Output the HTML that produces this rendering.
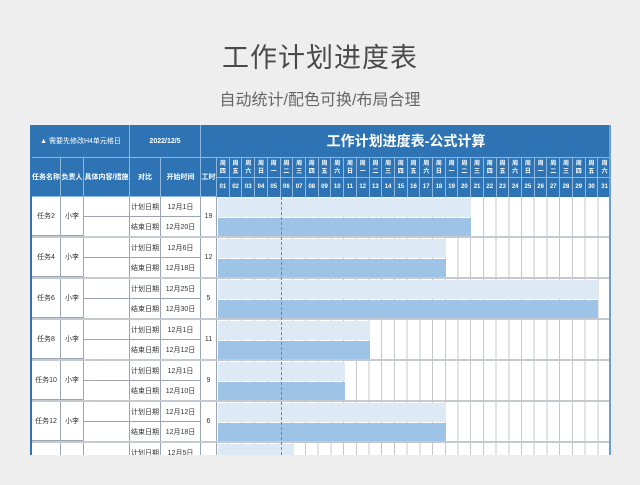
<!DOCTYPE html>
<html><head><meta charset="utf-8">
<style>
*{margin:0;padding:0;box-sizing:border-box}
body{width:640px;height:485px;background:#eeeeee;position:relative;overflow:hidden;font-family:"Liberation Sans","Noto Sans CJK SC",sans-serif}
.t{position:absolute;left:0;width:640px;text-align:center;color:#4a4a4a}
.wrap{position:absolute;left:30px;top:125px;width:581px;height:330px;overflow:hidden;background:#fff;border-left:2px solid #2e74b5;border-right:2px solid #6a9fd0}
.a{position:absolute;display:flex;align-items:center;justify-content:center;font-size:7px;color:#333;white-space:nowrap}
.h{background:#2e74b5;color:#fff;font-weight:bold;border-right:1px solid #8fb6dc;border-bottom:1px solid #8fb6dc}
.b{border-right:1px solid #9aa6b6;border-bottom:1px solid #9aa6b6}
</style></head><body>
<div class="t" style="top:36px;font-size:27px;letter-spacing:1px">工作计划进度表</div>
<div class="t" style="top:86px;font-size:16px;color:#666">自动统计/配色可换/布局合理</div>
<div class="wrap">
<div style="position:absolute;left:0;top:0;width:579px;height:72px;background:#2e74b5"></div>
<div class="a h" style="left:0;top:0;width:98px;height:33px;font-weight:normal">▲ 需要先修改H4单元格日</div>
<div class="a h" style="left:98px;top:0;width:71px;height:33px">2022/12/5</div>
<div class="a h" style="left:169px;top:0;width:410px;height:33px;font-size:14px;border-right:none">工作计划进度表-公式计算</div>
<div class="a h" style="left:0;top:33px;width:29px;height:39px">任务名称</div>
<div class="a h" style="left:29px;top:33px;width:23px;height:39px">负责人</div>
<div class="a h" style="left:52px;top:33px;width:46px;height:39px">具体内容/措施</div>
<div class="a h" style="left:98px;top:33px;width:31px;height:39px">对比</div>
<div class="a h" style="left:129px;top:33px;width:40px;height:39px">开始时间</div>
<div class="a h" style="left:169px;top:33px;width:16px;height:39px">工时</div>
<div style="position:absolute;left:185px;top:33px;width:394px;height:39px;display:grid;grid-template-columns:repeat(31,1fr);grid-template-rows:20px 19px;color:#fff;font-size:6px;font-weight:bold;text-align:center;line-height:8px">
<div style="border-right:1px solid #8fb6dc;border-bottom:1px solid #8fb6dc;padding-top:2px">周<br>四</div><div style="border-right:1px solid #8fb6dc;border-bottom:1px solid #8fb6dc;padding-top:2px">周<br>五</div><div style="border-right:1px solid #8fb6dc;border-bottom:1px solid #8fb6dc;padding-top:2px">周<br>六</div><div style="border-right:1px solid #8fb6dc;border-bottom:1px solid #8fb6dc;padding-top:2px">周<br>日</div><div style="border-right:1px solid #8fb6dc;border-bottom:1px solid #8fb6dc;padding-top:2px">周<br>一</div><div style="border-right:1px solid #8fb6dc;border-bottom:1px solid #8fb6dc;padding-top:2px">周<br>二</div><div style="border-right:1px solid #8fb6dc;border-bottom:1px solid #8fb6dc;padding-top:2px">周<br>三</div><div style="border-right:1px solid #8fb6dc;border-bottom:1px solid #8fb6dc;padding-top:2px">周<br>四</div><div style="border-right:1px solid #8fb6dc;border-bottom:1px solid #8fb6dc;padding-top:2px">周<br>五</div><div style="border-right:1px solid #8fb6dc;border-bottom:1px solid #8fb6dc;padding-top:2px">周<br>六</div><div style="border-right:1px solid #8fb6dc;border-bottom:1px solid #8fb6dc;padding-top:2px">周<br>日</div><div style="border-right:1px solid #8fb6dc;border-bottom:1px solid #8fb6dc;padding-top:2px">周<br>一</div><div style="border-right:1px solid #8fb6dc;border-bottom:1px solid #8fb6dc;padding-top:2px">周<br>二</div><div style="border-right:1px solid #8fb6dc;border-bottom:1px solid #8fb6dc;padding-top:2px">周<br>三</div><div style="border-right:1px solid #8fb6dc;border-bottom:1px solid #8fb6dc;padding-top:2px">周<br>四</div><div style="border-right:1px solid #8fb6dc;border-bottom:1px solid #8fb6dc;padding-top:2px">周<br>五</div><div style="border-right:1px solid #8fb6dc;border-bottom:1px solid #8fb6dc;padding-top:2px">周<br>六</div><div style="border-right:1px solid #8fb6dc;border-bottom:1px solid #8fb6dc;padding-top:2px">周<br>日</div><div style="border-right:1px solid #8fb6dc;border-bottom:1px solid #8fb6dc;padding-top:2px">周<br>一</div><div style="border-right:1px solid #8fb6dc;border-bottom:1px solid #8fb6dc;padding-top:2px">周<br>二</div><div style="border-right:1px solid #8fb6dc;border-bottom:1px solid #8fb6dc;padding-top:2px">周<br>三</div><div style="border-right:1px solid #8fb6dc;border-bottom:1px solid #8fb6dc;padding-top:2px">周<br>四</div><div style="border-right:1px solid #8fb6dc;border-bottom:1px solid #8fb6dc;padding-top:2px">周<br>五</div><div style="border-right:1px solid #8fb6dc;border-bottom:1px solid #8fb6dc;padding-top:2px">周<br>六</div><div style="border-right:1px solid #8fb6dc;border-bottom:1px solid #8fb6dc;padding-top:2px">周<br>日</div><div style="border-right:1px solid #8fb6dc;border-bottom:1px solid #8fb6dc;padding-top:2px">周<br>一</div><div style="border-right:1px solid #8fb6dc;border-bottom:1px solid #8fb6dc;padding-top:2px">周<br>二</div><div style="border-right:1px solid #8fb6dc;border-bottom:1px solid #8fb6dc;padding-top:2px">周<br>三</div><div style="border-right:1px solid #8fb6dc;border-bottom:1px solid #8fb6dc;padding-top:2px">周<br>四</div><div style="border-right:1px solid #8fb6dc;border-bottom:1px solid #8fb6dc;padding-top:2px">周<br>五</div><div style="border-bottom:1px solid #8fb6dc;padding-top:2px">周<br>六</div>
<div style="border-right:1px solid #8fb6dc;line-height:19px">01</div><div style="border-right:1px solid #8fb6dc;line-height:19px">02</div><div style="border-right:1px solid #8fb6dc;line-height:19px">03</div><div style="border-right:1px solid #8fb6dc;line-height:19px">04</div><div style="border-right:1px solid #8fb6dc;line-height:19px">05</div><div style="border-right:1px solid #8fb6dc;line-height:19px">06</div><div style="border-right:1px solid #8fb6dc;line-height:19px">07</div><div style="border-right:1px solid #8fb6dc;line-height:19px">08</div><div style="border-right:1px solid #8fb6dc;line-height:19px">09</div><div style="border-right:1px solid #8fb6dc;line-height:19px">10</div><div style="border-right:1px solid #8fb6dc;line-height:19px">11</div><div style="border-right:1px solid #8fb6dc;line-height:19px">12</div><div style="border-right:1px solid #8fb6dc;line-height:19px">13</div><div style="border-right:1px solid #8fb6dc;line-height:19px">14</div><div style="border-right:1px solid #8fb6dc;line-height:19px">15</div><div style="border-right:1px solid #8fb6dc;line-height:19px">16</div><div style="border-right:1px solid #8fb6dc;line-height:19px">17</div><div style="border-right:1px solid #8fb6dc;line-height:19px">18</div><div style="border-right:1px solid #8fb6dc;line-height:19px">19</div><div style="border-right:1px solid #8fb6dc;line-height:19px">20</div><div style="border-right:1px solid #8fb6dc;line-height:19px">21</div><div style="border-right:1px solid #8fb6dc;line-height:19px">22</div><div style="border-right:1px solid #8fb6dc;line-height:19px">23</div><div style="border-right:1px solid #8fb6dc;line-height:19px">24</div><div style="border-right:1px solid #8fb6dc;line-height:19px">25</div><div style="border-right:1px solid #8fb6dc;line-height:19px">26</div><div style="border-right:1px solid #8fb6dc;line-height:19px">27</div><div style="border-right:1px solid #8fb6dc;line-height:19px">28</div><div style="border-right:1px solid #8fb6dc;line-height:19px">29</div><div style="border-right:1px solid #8fb6dc;line-height:19px">30</div><div style="line-height:19px">31</div>
</div>
<div style="position:absolute;left:185px;top:72px;width:394px;height:258px;background-image:repeating-linear-gradient(90deg,transparent 0,transparent 11.71px,#c8c8c8 11.71px,#c8c8c8 12.71px)"></div>
<div style="position:absolute;left:0;top:72px;width:579px">
<div style="position:relative;height:41px;border-bottom:2px solid #c4c9d2">
 <div class="a b" style="left:0;top:0;width:29px;height:39px">任务2</div>
 <div class="a b" style="left:29px;top:0;width:23px;height:39px">小李</div>
 <div class="b" style="position:absolute;left:52px;top:0;width:46px;height:20px"></div>
 <div class="b" style="position:absolute;left:52px;top:20px;width:46px;height:19px;border-bottom:none"></div>
 <div class="a b" style="left:98px;top:0;width:31px;height:20px">计划日期</div>
 <div class="a b" style="left:98px;top:20px;width:31px;height:19px;border-bottom:none">结束日期</div>
 <div class="a b" style="left:129px;top:0;width:40px;height:20px">12月1日</div>
 <div class="a b" style="left:129px;top:20px;width:40px;height:19px;border-bottom:none">12月20日</div>
 <div class="a b" style="left:169px;top:0;width:16px;height:39px;border-bottom:none">19</div>
 <div style="position:absolute;left:186px;top:1px;width:253px;height:19px;background:#dde9f5"></div>
 <div style="position:absolute;left:186px;top:21px;width:253px;height:18px;background:#9dc3e6"></div>
</div>
<div style="position:relative;height:41px;border-bottom:2px solid #c4c9d2">
 <div class="a b" style="left:0;top:0;width:29px;height:39px">任务4</div>
 <div class="a b" style="left:29px;top:0;width:23px;height:39px">小李</div>
 <div class="b" style="position:absolute;left:52px;top:0;width:46px;height:20px"></div>
 <div class="b" style="position:absolute;left:52px;top:20px;width:46px;height:19px;border-bottom:none"></div>
 <div class="a b" style="left:98px;top:0;width:31px;height:20px">计划日期</div>
 <div class="a b" style="left:98px;top:20px;width:31px;height:19px;border-bottom:none">结束日期</div>
 <div class="a b" style="left:129px;top:0;width:40px;height:20px">12月6日</div>
 <div class="a b" style="left:129px;top:20px;width:40px;height:19px;border-bottom:none">12月18日</div>
 <div class="a b" style="left:169px;top:0;width:16px;height:39px;border-bottom:none">12</div>
 <div style="position:absolute;left:186px;top:1px;width:228px;height:19px;background:#dde9f5"></div>
 <div style="position:absolute;left:186px;top:21px;width:228px;height:18px;background:#9dc3e6"></div>
</div>
<div style="position:relative;height:41px;border-bottom:2px solid #c4c9d2">
 <div class="a b" style="left:0;top:0;width:29px;height:39px">任务6</div>
 <div class="a b" style="left:29px;top:0;width:23px;height:39px">小李</div>
 <div class="b" style="position:absolute;left:52px;top:0;width:46px;height:20px"></div>
 <div class="b" style="position:absolute;left:52px;top:20px;width:46px;height:19px;border-bottom:none"></div>
 <div class="a b" style="left:98px;top:0;width:31px;height:20px">计划日期</div>
 <div class="a b" style="left:98px;top:20px;width:31px;height:19px;border-bottom:none">结束日期</div>
 <div class="a b" style="left:129px;top:0;width:40px;height:20px">12月25日</div>
 <div class="a b" style="left:129px;top:20px;width:40px;height:19px;border-bottom:none">12月30日</div>
 <div class="a b" style="left:169px;top:0;width:16px;height:39px;border-bottom:none">5</div>
 <div style="position:absolute;left:186px;top:1px;width:380px;height:19px;background:#dde9f5"></div>
 <div style="position:absolute;left:186px;top:21px;width:380px;height:18px;background:#9dc3e6"></div>
</div>
<div style="position:relative;height:41px;border-bottom:2px solid #c4c9d2">
 <div class="a b" style="left:0;top:0;width:29px;height:39px">任务8</div>
 <div class="a b" style="left:29px;top:0;width:23px;height:39px">小李</div>
 <div class="b" style="position:absolute;left:52px;top:0;width:46px;height:20px"></div>
 <div class="b" style="position:absolute;left:52px;top:20px;width:46px;height:19px;border-bottom:none"></div>
 <div class="a b" style="left:98px;top:0;width:31px;height:20px">计划日期</div>
 <div class="a b" style="left:98px;top:20px;width:31px;height:19px;border-bottom:none">结束日期</div>
 <div class="a b" style="left:129px;top:0;width:40px;height:20px">12月1日</div>
 <div class="a b" style="left:129px;top:20px;width:40px;height:19px;border-bottom:none">12月12日</div>
 <div class="a b" style="left:169px;top:0;width:16px;height:39px;border-bottom:none">11</div>
 <div style="position:absolute;left:186px;top:1px;width:152px;height:19px;background:#dde9f5"></div>
 <div style="position:absolute;left:186px;top:21px;width:152px;height:18px;background:#9dc3e6"></div>
</div>
<div style="position:relative;height:41px;border-bottom:2px solid #c4c9d2">
 <div class="a b" style="left:0;top:0;width:29px;height:39px">任务10</div>
 <div class="a b" style="left:29px;top:0;width:23px;height:39px">小李</div>
 <div class="b" style="position:absolute;left:52px;top:0;width:46px;height:20px"></div>
 <div class="b" style="position:absolute;left:52px;top:20px;width:46px;height:19px;border-bottom:none"></div>
 <div class="a b" style="left:98px;top:0;width:31px;height:20px">计划日期</div>
 <div class="a b" style="left:98px;top:20px;width:31px;height:19px;border-bottom:none">结束日期</div>
 <div class="a b" style="left:129px;top:0;width:40px;height:20px">12月1日</div>
 <div class="a b" style="left:129px;top:20px;width:40px;height:19px;border-bottom:none">12月10日</div>
 <div class="a b" style="left:169px;top:0;width:16px;height:39px;border-bottom:none">9</div>
 <div style="position:absolute;left:186px;top:1px;width:127px;height:19px;background:#dde9f5"></div>
 <div style="position:absolute;left:186px;top:21px;width:127px;height:18px;background:#9dc3e6"></div>
</div>
<div style="position:relative;height:41px;border-bottom:2px solid #c4c9d2">
 <div class="a b" style="left:0;top:0;width:29px;height:39px">任务12</div>
 <div class="a b" style="left:29px;top:0;width:23px;height:39px">小李</div>
 <div class="b" style="position:absolute;left:52px;top:0;width:46px;height:20px"></div>
 <div class="b" style="position:absolute;left:52px;top:20px;width:46px;height:19px;border-bottom:none"></div>
 <div class="a b" style="left:98px;top:0;width:31px;height:20px">计划日期</div>
 <div class="a b" style="left:98px;top:20px;width:31px;height:19px;border-bottom:none">结束日期</div>
 <div class="a b" style="left:129px;top:0;width:40px;height:20px">12月12日</div>
 <div class="a b" style="left:129px;top:20px;width:40px;height:19px;border-bottom:none">12月18日</div>
 <div class="a b" style="left:169px;top:0;width:16px;height:39px;border-bottom:none">6</div>
 <div style="position:absolute;left:186px;top:1px;width:228px;height:19px;background:#dde9f5"></div>
 <div style="position:absolute;left:186px;top:21px;width:228px;height:18px;background:#9dc3e6"></div>
</div>
<div style="position:relative;height:41px">
 <div class="b" style="position:absolute;left:0;top:0;width:29px;height:39px"></div>
 <div class="b" style="position:absolute;left:29px;top:0;width:23px;height:39px"></div>
 <div class="b" style="position:absolute;left:52px;top:0;width:46px;height:20px"></div>
 <div class="a b" style="left:98px;top:0;width:31px;height:20px">计划日期</div>
 <div class="a b" style="left:129px;top:0;width:40px;height:20px">12月5日</div>
 <div class="b" style="position:absolute;left:169px;top:0;width:16px;height:39px"></div>
 <div style="position:absolute;left:186px;top:1px;width:76px;height:19px;background:#dde9f5"></div>
</div>
</div>
<div style="position:absolute;left:249px;top:72px;width:0;height:258px;border-left:1px dashed #e8546a"></div>
</div>
</body></html>
